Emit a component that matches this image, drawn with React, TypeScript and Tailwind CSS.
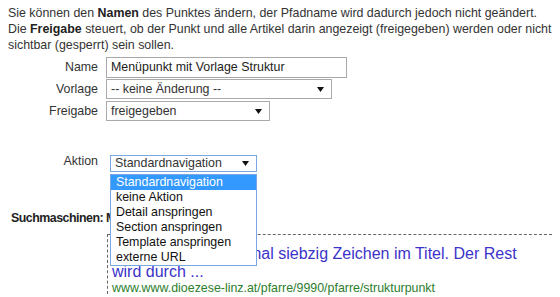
import React from 'react';

const Arrow: React.FC = () => (
  <svg width="7" height="5" viewBox="0 0 7 5" className="shrink-0">
    <path d="M0 0 L7 0 L3.5 5 Z" fill="#111" />
  </svg>
);

const FakeSelect: React.FC<{ value: string; width: string; focused?: boolean }> = ({ value, width, focused }) => (
  <div
    className={`flex items-center justify-between pl-[4px] pr-[7px] border bg-white ${width} ${
      focused ? 'border-[#7aa7e0] h-[17px]' : 'border-[#a9a9a9] h-[20px]'
    }`}
  >
    <span className="leading-none">{value}</span>
    <Arrow />
  </div>
);

const options = [
  'Standardnavigation',
  'keine Aktion',
  'Detail anspringen',
  'Section anspringen',
  'Template anspringen',
  'externe URL',
];

export default function App() {
  return (
    <div className="relative w-[560px] h-[297px] overflow-hidden bg-white px-2 pt-[5px] font-['Liberation_Sans',Arial,sans-serif] text-[12.4px] text-[#333]">
      <p className="leading-[16px]">
        Sie können den <b className="text-[#222]">Namen</b> des Punktes ändern, der Pfadname wird dadurch jedoch nicht geändert.
        Die <b className="text-[#222]">Freigabe</b> steuert, ob der Punkt und alle Artikel darin angezeigt (freigegeben) werden oder nicht
        sichtbar (gesperrt) sein sollen.
      </p>

      <div className="mt-[4px] flex flex-col gap-[1px]">
        <div className="flex items-center">
          <span className="w-[90px] text-right">Name</span>
          <div className="ml-[8px] w-[241px] h-[21px] border border-[#a9a9a9] pl-[4px] flex items-center text-[#222]">
            Menüpunkt mit Vorlage Struktur
          </div>
        </div>
        <div className="flex items-center">
          <span className="w-[90px] text-right">Vorlage</span>
          <div className="ml-[8px]">
            <FakeSelect value="-- keine Änderung --" width="w-[226px]" />
          </div>
        </div>
        <div className="flex items-center mt-[1px]">
          <span className="w-[90px] text-right">Freigabe</span>
          <div className="ml-[8px]">
            <FakeSelect value="freigegeben" width="w-[164px]" />
          </div>
        </div>
      </div>

      <div className="relative mt-[34px] flex items-start">
        <span className="w-[90px] text-right leading-[12px]">Aktion</span>
        <div className="ml-[12px] relative">
          <FakeSelect value="Standardnavigation" width="w-[147px]" focused />
          <ul className="absolute left-0 top-[19px] z-10 w-[147px] border border-[#7aa7e0] bg-white text-[#111]">
            {options.map((o, i) => (
              <li
                key={o}
                className={`h-[15px] leading-[15px] pl-[5px] ${i === 0 ? 'bg-[#3399ff] text-white' : ''}`}
              >
                {o}
              </li>
            ))}
          </ul>
        </div>
      </div>

      <div className="mt-[38px] font-bold text-[#222] leading-[16px] pl-[3px] tracking-[-0.5px]">Suchmaschinen: Meta-Daten</div>

      <div className="mt-[8px] ml-[99px] border-t border-l border-dashed border-[#666] pl-[4px] pt-[10px]">
        <div className="max-w-[420px] text-[16px] leading-[18px] text-[#3b33c9]">
          Der Titel zeigt maximal siebzig Zeichen im Titel. Der Rest wird durch ...
        </div>
        <div className="text-[12.4px] leading-[12px] text-[#2d7d2d] mt-[1px]">
          www.www.dioezese-linz.at/pfarre/9990/pfarre/strukturpunkt
        </div>
      </div>
    </div>
  );
}
